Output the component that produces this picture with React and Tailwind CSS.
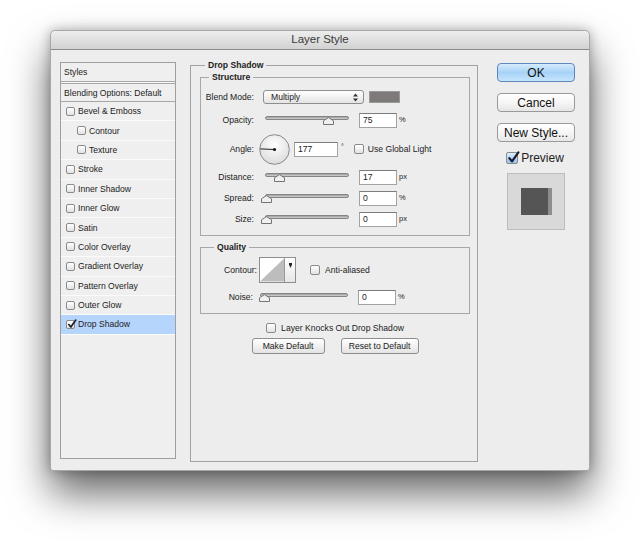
import React from 'react';

const styleItems = [
  { name: 'Bevel & Emboss' },
  { name: 'Contour', indent: true },
  { name: 'Texture', indent: true },
  { name: 'Stroke' },
  { name: 'Inner Shadow' },
  { name: 'Inner Glow' },
  { name: 'Satin' },
  { name: 'Color Overlay' },
  { name: 'Gradient Overlay' },
  { name: 'Pattern Overlay' },
  { name: 'Outer Glow' },
  { name: 'Drop Shadow', checked: true, active: true },
];

function Check({ size = 10, checked = false, blue = false }) {
  const sz = size === 9 ? 'w-[9px] h-[9px]' : size === 12 ? 'w-[12px] h-[12px]' : 'w-[10px] h-[10px]';
  return (
    <span
      className={`relative shrink-0 ${sz} rounded-[2px] border border-[#8a8a8a] ${
        blue ? 'bg-gradient-to-b from-[#dcefff] to-[#8ec3ef]' : 'bg-gradient-to-b from-white to-[#e2e2e2]'
      }`}
    >
      {checked && (
        <svg className="absolute -top-[2px] left-[0px]" width={size + 1} height={size + 1} viewBox="0 0 13 13">
          <path d="M2.4 7.2 L5 10.4 L11.4 1.4" fill="none" stroke="#1c1c2e" strokeWidth="2.2" strokeLinecap="round" strokeLinejoin="round" />
        </svg>
      )}
    </span>
  );
}

function Slider({ wide = false, pos }) {
  return (
    <div className={`relative h-[9px] shrink-0 ${wide ? 'w-[88px]' : 'w-[84px]'}`}>
      <div className="h-[4px] rounded-full border border-[#858585] bg-gradient-to-b from-[#9e9e9e] to-[#d2d2d2]" />
      <svg className="absolute top-[1px]" style={{ left: pos - 5 }} width="11" height="8" viewBox="0 0 11 8">
        <path d="M0.5 7.5 V3.8 L5.5 0.6 L10.5 3.8 V7.5 Z" fill="#f0f0f0" stroke="#747474" strokeWidth="1" />
      </svg>
    </div>
  );
}

function Field({ value, wide = false }) {
  return (
    <div
      className={`h-[15px] shrink-0 bg-white border border-[#a2a2a2] border-t-[#7c7c7c] pl-[3px] flex items-center ${
        wide ? 'w-[44px]' : 'w-[38px]'
      }`}
    >
      {value}
    </div>
  );
}

function SliderRow({ label, pos, value, unit }) {
  return (
    <div className="flex items-center h-[16px]">
      <span className="w-[53px] text-right">{label}</span>
      <div className="ml-[11px]">
        <Slider pos={pos} />
      </div>
      <div className="ml-[10px]">
        <Field value={value} />
      </div>
      <span className="ml-[2px] text-[7.5px]">{unit}</span>
    </div>
  );
}

function Dial() {
  return (
    <svg width="31" height="31" viewBox="0 0 31 31" className="shrink-0">
      <defs>
        <radialGradient id="dialg" cx="50%" cy="35%" r="65%">
          <stop offset="0%" stopColor="#ffffff" />
          <stop offset="100%" stopColor="#dcdcdc" />
        </radialGradient>
      </defs>
      <circle cx="15.5" cy="15.5" r="14.8" fill="url(#dialg)" stroke="#8a8a8a" strokeWidth="1" />
      <line x1="15.5" y1="15.5" x2="1.2" y2="14.9" stroke="#222" strokeWidth="1" />
      <circle cx="15.5" cy="15.5" r="1.6" fill="#111" />
    </svg>
  );
}

function MacButton({ children, primary = false }) {
  return (
    <div
      className={`h-[19px] w-[78px] rounded-[4px] border flex items-center justify-center text-[12px] text-[#111] ${
        primary
          ? 'border-[#5e88bd] bg-gradient-to-b from-[#d6ecfd] via-[#a7d2f7] to-[#c6e5fc]'
          : 'border-[#9a9a9a] bg-gradient-to-b from-white via-[#f6f6f6] to-[#e6e6e6]'
      }`}
    >
      {children}
    </div>
  );
}

export default function App() {
  return (
    <div className="w-[640px] h-[541px] bg-white pt-[30px] pl-[50px] font-['Liberation_Sans',Arial,sans-serif] text-[#222] overflow-hidden">
      <div className="w-[540px] h-[441px] flex flex-col rounded-t-[5px] rounded-b-[3px] bg-[#ededed] border border-[#a8a8a8] shadow-[0_22px_40px_rgba(0,0,0,0.6),0_0_12px_rgba(0,0,0,0.28)]">
        {/* title bar */}
        <div className="h-[19px] shrink-0 rounded-t-[5px] bg-gradient-to-b from-[#eeeeee] to-[#d2d2d2] border-b border-[#8c8c8c] flex items-center justify-center text-[11.5px] text-[#3a3a3a]">
          Layer Style
        </div>

        <div className="flex items-start pl-[9px] text-[8.6px] leading-[10px]">
          {/* styles list */}
          <div className="mt-[12px] w-[116px] h-[397px] border border-[#9f9f9f] bg-[#efefef] flex flex-col">
            <div className="h-[18px] flex items-center pl-[3px]">Styles</div>
            <div className="h-[3px] border-y border-[#a7a7a7] bg-[#f7f7f7]" />
            <div className="h-[18px] flex items-center pl-[3px] border-b border-[#a7a7a7]">Blending Options: Default</div>
            {styleItems.map((it) => (
              <div
                key={it.name}
                className={`h-[19.4px] shrink-0 flex items-center gap-[3px] border-b border-[#fbfbfb] ${
                  it.indent ? 'pl-[16px]' : 'pl-[5px]'
                } ${it.active ? 'bg-[#b6d5fc]' : ''}`}
              >
                <Check size={9} checked={it.checked} />
                <span>{it.name}</span>
              </div>
            ))}
          </div>

          {/* drop shadow settings */}
          <fieldset className="ml-[14px] mt-[10px] w-[288px] h-[402px] border border-[#a2a2a2] pl-[9px] pr-[7px]">
            <legend className="ml-[5px] px-[3px] font-bold">Drop Shadow</legend>

            <fieldset className="mt-[2px] border border-[#a8a8a8] pt-[7px] pb-[8px]">
              <legend className="ml-[8px] px-[3px] font-bold">Structure</legend>

              <div className="flex items-center h-[16px]">
                <span className="w-[53px] text-right">Blend Mode:</span>
                <div className="ml-[9px] w-[101px] h-[14px] rounded-[3px] border border-[#8e8e8e] bg-gradient-to-b from-white to-[#e4e4e4] flex items-center justify-between pl-[7px] pr-[5px]">
                  <span>Multiply</span>
                  <svg width="5" height="9" viewBox="0 0 5 9">
                    <path d="M0 3.6 L2.5 0.4 L5 3.6 Z M0 5.4 L2.5 8.6 L5 5.4 Z" fill="#333" />
                  </svg>
                </div>
                <div className="ml-[5px] w-[31px] h-[12px] bg-[#7e7a7a] border border-[#9a9a9a]" />
              </div>

              <div className="mt-[7px]">
                <SliderRow label="Opacity:" pos={63} value="75" unit="%" />
              </div>

              <div className="mt-[5px] flex items-center h-[32px]">
                <span className="w-[53px] text-right">Angle:</span>
                <div className="ml-[5px]">
                  <Dial />
                </div>
                <div className="ml-[4px]">
                  <Field value="177" wide />
                </div>
                <span className="ml-[3px] self-start mt-[9px] text-[7px]">°</span>
                <div className="ml-[10px] flex items-center gap-[4px]">
                  <Check />
                  <span>Use Global Light</span>
                </div>
              </div>

              <div className="mt-[4px]">
                <SliderRow label="Distance:" pos={14} value="17" unit="px" />
              </div>
              <div className="mt-[5px]">
                <SliderRow label="Spread:" pos={1} value="0" unit="%" />
              </div>
              <div className="mt-[5px]">
                <SliderRow label="Size:" pos={1} value="0" unit="px" />
              </div>
            </fieldset>

            <fieldset className="mt-[6px] border border-[#a8a8a8] pt-[5px] pb-[8px]">
              <legend className="ml-[13px] px-[3px] font-bold">Quality</legend>

              <div className="flex items-center h-[26px]">
                <span className="w-[56px] text-right">Contour:</span>
                <div className="ml-[2px] flex h-[26px] border border-[#8e8e8e] bg-white">
                  <svg width="25" height="24" viewBox="0 0 25 24" className="border-r border-[#9a9a9a]">
                    <path d="M0 24 L25 0 L25 24 Z" fill="#bdbdbd" />
                  </svg>
                  <div className="w-[10px] flex justify-center pt-[5px] bg-gradient-to-b from-white to-[#e6e6e6]">
                    <svg width="3" height="5" viewBox="0 0 3 5">
                      <path d="M0 0 H3 V1.5 L1.5 5 L0 1.5 Z" fill="#222" />
                    </svg>
                  </div>
                </div>
                <div className="ml-[14px] flex items-center gap-[5px]">
                  <Check />
                  <span>Anti-aliased</span>
                </div>
              </div>

              <div className="mt-[6px] flex items-center h-[16px]">
                <span className="w-[52px] text-right">Noise:</span>
                <div className="ml-[7px]">
                  <Slider wide pos={4} />
                </div>
                <div className="ml-[10px]">
                  <Field value="0" />
                </div>
                <span className="ml-[2px] text-[7.5px]">%</span>
              </div>
            </fieldset>

            <div className="mt-[8px] h-[12px] flex items-center justify-center gap-[5px]">
              <Check />
              <span>Layer Knocks Out Drop Shadow</span>
            </div>

            <div className="mt-[4px] flex justify-center gap-[16px]">
              <div className="w-[73px] h-[16px] rounded-[3px] border border-[#8e8e8e] bg-gradient-to-b from-white to-[#e4e4e4] flex items-center justify-center">
                Make Default
              </div>
              <div className="w-[78px] h-[16px] rounded-[3px] border border-[#8e8e8e] bg-gradient-to-b from-white to-[#e4e4e4] flex items-center justify-center">
                Reset to Default
              </div>
            </div>
          </fieldset>

          {/* buttons column */}
          <div className="ml-[19px] mt-[13px] w-[78px] flex flex-col items-center">
            <MacButton primary>OK</MacButton>
            <div className="mt-[11px]">
              <MacButton>Cancel</MacButton>
            </div>
            <div className="mt-[11px]">
              <MacButton>New Style...</MacButton>
            </div>
            <div className="mt-[9px] flex items-center gap-[3px] text-[12px] leading-[14px] pr-[2px]">
              <Check size={12} checked blue />
              <span>Preview</span>
            </div>
            <div className="mt-[8px] w-[58px] h-[57px] bg-[#d9d9d9] border border-[#bdbdbd] flex items-center justify-center">
              <div className="w-[27px] h-[27px] bg-[#555555] shadow-[4px_0_0_#8d8d8d] -translate-x-[2px]" />
            </div>
          </div>
        </div>
      </div>
    </div>
  );
}
